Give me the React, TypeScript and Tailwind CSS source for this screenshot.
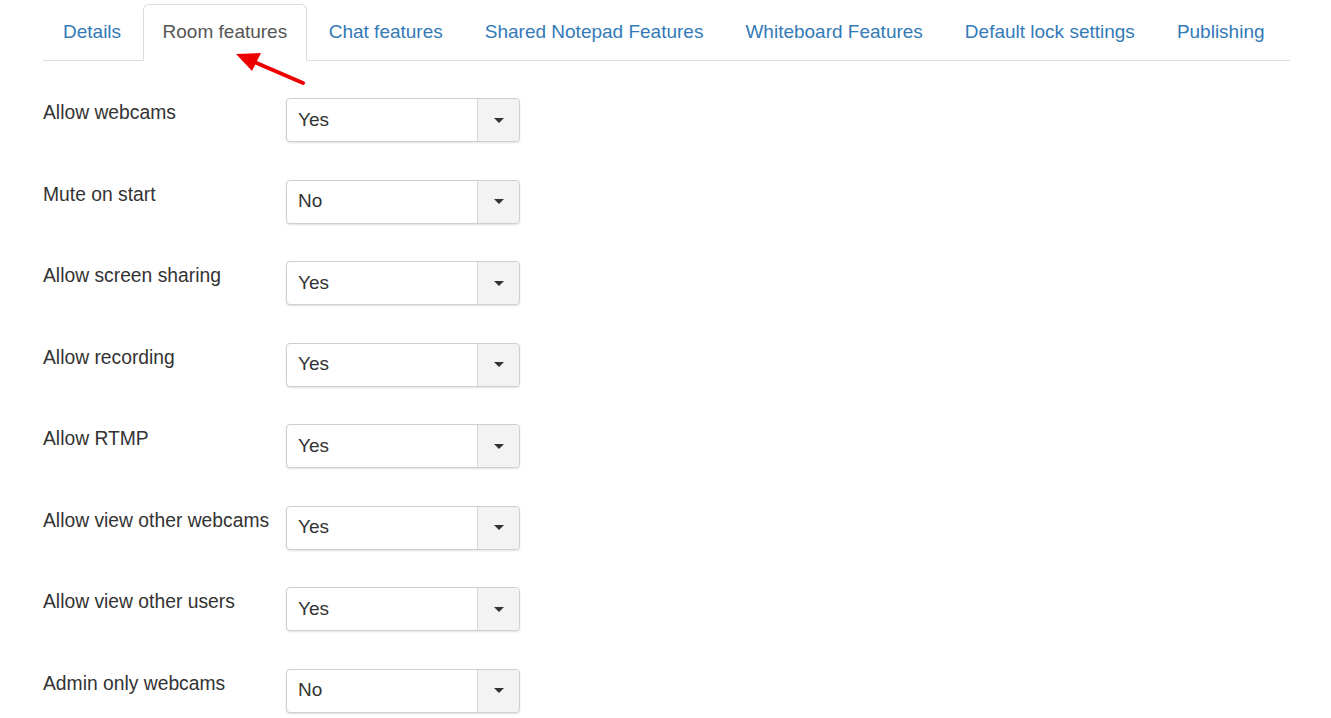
const tabs = [
  "Details",
  "Room features",
  "Chat features",
  "Shared Notepad Features",
  "Whiteboard Features",
  "Default lock settings",
  "Publishing",
];

const rows: [string, string][] = [
  ["Allow webcams", "Yes"],
  ["Mute on start", "No"],
  ["Allow screen sharing", "Yes"],
  ["Allow recording", "Yes"],
  ["Allow RTMP", "Yes"],
  ["Allow view other webcams", "Yes"],
  ["Allow view other users", "Yes"],
  ["Admin only webcams", "No"],
];

function Select({ value }: { value: string }) {
  return (
    <div className="flex h-[44px] w-[234px] rounded-[4px] border border-[#cfcfcf] bg-white shadow-[0_1px_2px_rgba(0,0,0,0.12)]">
      <div className="flex flex-1 items-center pl-[11px] text-[19px] text-[#333]">{value}</div>
      <div className="flex w-[42px] items-center justify-center rounded-r-[4px] border-l border-[#d6d6d6] bg-[#f3f3f3]">
        <div className="h-0 w-0 border-x-[5px] border-t-[5px] border-x-transparent border-t-[#333]" />
      </div>
    </div>
  );
}

export default function App() {
  return (
    <div className="relative min-h-screen bg-white pl-[43px] pr-[41px] pt-[4px] font-['Liberation_Sans',Arial,sans-serif]">
      <div className="flex border-b border-[#dddddd]">
        {tabs.map((t, i) =>
          i === 1 ? (
            <div
              key={t}
              className="-mb-px mr-[2px] flex h-[57px] items-center rounded-t-[6px] border border-b-white border-[#dddddd] bg-white px-[18.5px] text-[19px] text-[#555]"
            >
              {t}
            </div>
          ) : (
            <div
              key={t}
              className="mr-[2px] flex h-[56px] items-center border border-transparent px-[19px] text-[19px] text-[#337ab7]"
            >
              {t}
            </div>
          )
        )}
      </div>

      <div className="mt-[37px] flex flex-col gap-[37.5px]">
        {rows.map(([label, value]) => (
          <div key={label} className="flex">
            <div className="w-[243px] pt-[1px] text-[19.3px] text-[#333]">{label}</div>
            <Select value={value} />
          </div>
        ))}
      </div>

      <svg className="absolute left-0 top-0" width="400" height="100" viewBox="0 0 400 100">
        <line x1="303" y1="83" x2="252" y2="61" stroke="#ee0000" strokeWidth="4" strokeLinecap="round" />
        <polygon points="236,54 261,53 252,71" fill="#ee0000" />
      </svg>
    </div>
  );
}
